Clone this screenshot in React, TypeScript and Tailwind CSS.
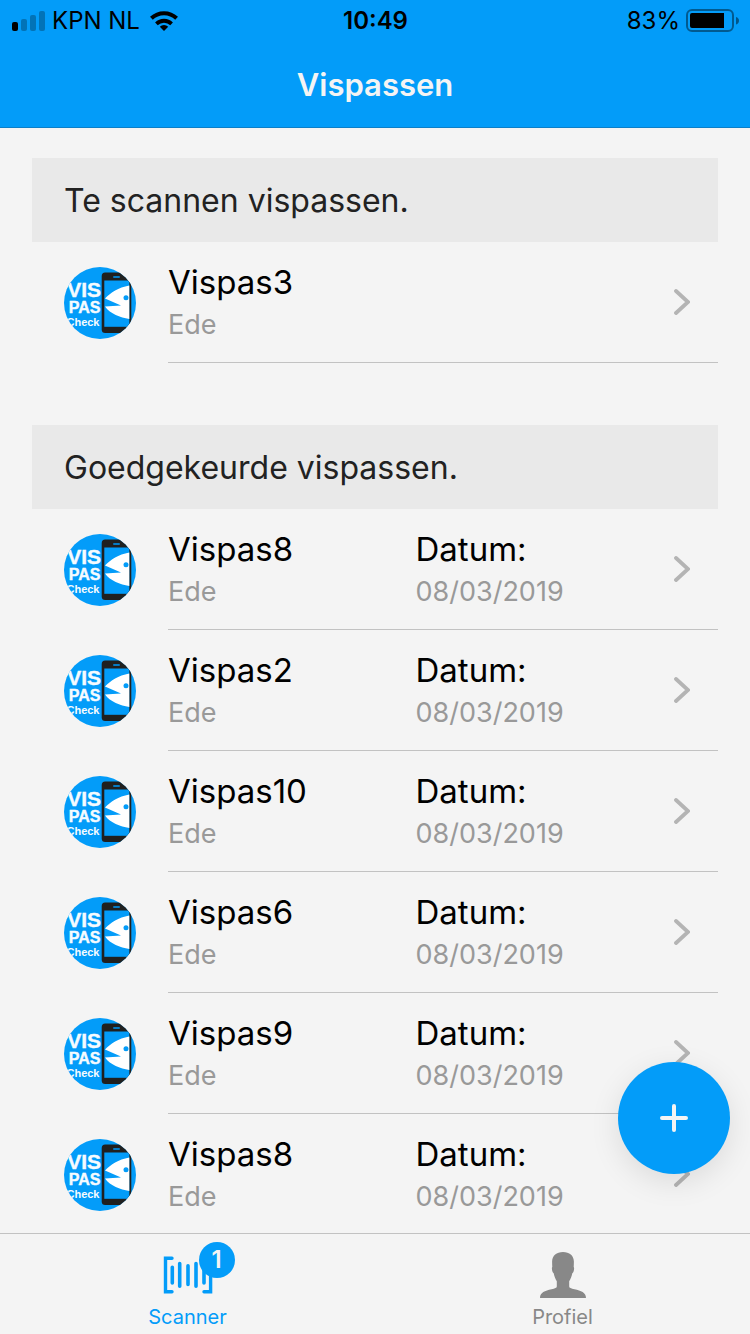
import React from "react";

type Pass = { name: string; place: string; date?: string };

const toScan: Pass[] = [{ name: "Vispas3", place: "Ede" }];

const approved: Pass[] = [
  { name: "Vispas8", place: "Ede", date: "08/03/2019" },
  { name: "Vispas2", place: "Ede", date: "08/03/2019" },
  { name: "Vispas10", place: "Ede", date: "08/03/2019" },
  { name: "Vispas6", place: "Ede", date: "08/03/2019" },
  { name: "Vispas9", place: "Ede", date: "08/03/2019" },
  { name: "Vispas8", place: "Ede", date: "08/03/2019" },
];

function SignalIcon() {
  return (
    <svg width="34" height="20" viewBox="0 0 34 20" aria-hidden="true">
      <rect x="0" y="11" width="6" height="9" rx="2" />
      <g opacity="0.26">
        <rect x="9" y="8" width="6" height="12" rx="2" />
        <rect x="18" y="4" width="6" height="16" rx="2" />
        <rect x="27" y="0" width="6" height="20" rx="2" />
      </g>
    </svg>
  );
}

function WifiIcon() {
  return (
    <svg width="28" height="20" viewBox="0 0 28 20" fill="none" stroke="#000" strokeWidth="4" aria-hidden="true">
      <path d="M1.4 7.200a18.200 18.200 0 0 1 25.200 0" />
      <path d="M6.400 12.800a11 11 0 0 1 15.200 0" strokeWidth="3.800" />
      <path d="M14 20l-4.200-4.300a6 6 0 0 1 8.400 0z" fill="#000" stroke="none" />
    </svg>
  );
}

function BatteryIcon() {
  return (
    <svg width="53" height="23" viewBox="0 0 53 23" aria-hidden="true">
      <rect x="1" y="1" width="46" height="21" rx="5" fill="none" stroke="#000" strokeOpacity="0.42" strokeWidth="2" />
      <path d="M6 4h32v15H6a2 2 0 0 1-2-2V6a2 2 0 0 1 2-2z" />
      <path d="M50 8c4 1 4 6.500 0 7.500z" opacity="0.45" />
    </svg>
  );
}

function PassLogo() {
  const id = React.useId();
  return (
    <svg className="size-18 shrink-0" viewBox="0 0 72 72" aria-hidden="true">
      <clipPath id={id}>
        <circle cx="36" cy="36" r="36" />
      </clipPath>
      <g clipPath={`url(#${id})`}>
        <rect width="72" height="72" fill="#039cf9" />
        <g fill="#f5fbff" stroke="#f5fbff" strokeWidth="0.400" fontFamily="Liberation Sans, sans-serif" fontWeight="700" textAnchor="end">
          <text x="37" y="29.500" fontSize="21">VIS</text>
          <text x="36.500" y="46" fontSize="16">PAS</text>
          <text x="35.500" y="59" fontSize="11" strokeWidth="0">Check</text>
        </g>
        <rect x="37.700" y="5.500" width="29.600" height="60.500" rx="3.500" fill="#20201f" />
        <rect x="40.300" y="13.500" width="25" height="46.300" fill="#039cf9" />
        <rect x="49" y="9" width="7" height="2" rx="1" fill="#067bc4" />
        <path d="M41 31.500C47 25.500 54 20.500 65.300 18.500V52C56 50.500 46.500 47 41 39.500L57 38.500Z" fill="#fff" />
        <circle cx="62" cy="30.700" r="2.500" fill="#039cf9" />
      </g>
    </svg>
  );
}

function Chevron() {
  return (
    <svg className="mr-7 w-4 shrink-0" viewBox="0 0 16 26" fill="none" stroke="#b4b4b4" strokeWidth="3.800" strokeLinecap="round" aria-hidden="true">
      <path d="M2 2l12 11-12 11" />
    </svg>
  );
}

function BarcodeIcon() {
  return (
    <svg width="52" height="40" viewBox="0 0 52 40" fill="none" stroke="currentColor" strokeWidth="3.600" strokeLinecap="round" aria-hidden="true">
      <path d="M10 3.300H3.500V36.800H10M42 3.300h6.600V36.800H42" strokeWidth="3.400" />
      <path d="M10.300 12.300v15.600M17.700 8.500v22.700M26 10.700v18.700M34 8.500v22.700M42 12.300v15.600" />
    </svg>
  );
}

function PersonIcon() {
  return (
    <svg width="46" height="46" viewBox="0 0 46 46" fill="currentColor" aria-hidden="true">
      <path d="M23 0C16.500 0 12.300 3.500 12.100 9.500c0 2 .1 4 .2 5.500-.7.200-.4 2.500 0 4 .4 1.400.9 2 1.400 2.300.6 3 1.700 5.700 3.100 8v5.200c0 1.400-1.800 2-5.300 2.800C5 38.800 0 40.500 0 46h46c0-5.500-5-7.200-11.500-8.700-3.500-.8-5.300-1.400-5.300-2.800v-5.200c1.400-2.300 2.500-5 3.100-8 .5-.3 1-.9 1.400-2.300.4-1.500.7-3.800 0-4 .1-1.500.2-3.500.2-5.500C33.700 3.500 29.500 0 23 0z" />
    </svg>
  );
}

function PassRow({ pass }: { pass: Pass }) {
  return (
    <li>
      <a href="#pas" className="flex items-center gap-8 pl-8">
        <PassLogo />
        <div className="flex min-w-0 flex-1 items-center border-b border-[#c2c2c2]">
          <div className="w-[45%] shrink-0 pt-[19px] pb-4">
            <p className="text-[33px] leading-[42px] text-black">{pass.name}</p>
            <p className="text-[27px] leading-[43px] text-[#999999]">{pass.place}</p>
          </div>
          <div className="min-w-0 flex-1 pt-[19px] pb-4">
            {pass.date && (
              <>
                <p className="text-[33px] leading-[42px] text-black">Datum:</p>
                <p className="text-[27px] leading-[43px] text-[#999999]">{pass.date}</p>
              </>
            )}
          </div>
          <Chevron />
        </div>
      </a>
    </li>
  );
}

function PassSection({ title, passes }: { title: string; passes: Pass[] }) {
  return (
    <section>
      <h2 className="bg-[#e9e9e9] px-8 pt-[21px] pb-[19px] text-[32px] leading-[44px] text-[#222222]">{title}</h2>
      <ul>
        {passes.map((pass, i) => (
          <PassRow key={i} pass={pass} />
        ))}
      </ul>
    </section>
  );
}

export default function App() {
  return (
    <div className="flex h-screen flex-col bg-[#f4f4f4] font-['Inter',sans-serif]">
      <header className="border-b border-[#0c7fc8] bg-[#039cf9]">
        <div className="grid h-[41px] grid-cols-3 items-center pr-[11px] pl-3 text-2xl text-black">
          <div className="flex items-center gap-1.5">
            <SignalIcon />
            <span>KPN NL</span>
            <span className="pl-1">
              <WifiIcon />
            </span>
          </div>
          <span className="text-center font-semibold">10:49</span>
          <div className="flex items-center justify-end gap-1.5">
            <span>83%</span>
            <BatteryIcon />
          </div>
        </div>
        <h1 className="pt-[22px] pb-5 text-center text-[31px] leading-[44px] font-semibold text-[#f4f4f4]">Vispassen</h1>
      </header>

      <div className="relative min-h-0 flex-1">
        <main className="flex h-full flex-col gap-[62px] overflow-y-auto px-8 pt-[30px] [scrollbar-width:none]">
          <PassSection title="Te scannen vispassen." passes={toScan} />
          <PassSection title="Goedgekeurde vispassen." passes={approved} />
        </main>
        <button
          type="button"
          aria-label="Vispas toevoegen"
          className="absolute right-5 bottom-[59px] flex size-28 items-center justify-center rounded-full bg-[#039cf9] shadow-[0_8px_30px_rgba(0,0,0,0.1)]"
        >
          <svg width="28" height="28" viewBox="0 0 28 28" stroke="#f4f4f4" strokeWidth="4" strokeLinecap="round" aria-hidden="true">
            <path d="M14 2v24M2 14h24" />
          </svg>
        </button>
      </div>

      <nav className="grid grid-cols-2 border-t border-[#c2c2c2] bg-[#f4f4f4] text-xl leading-6">
        <a href="#scanner" className="flex flex-col items-center gap-2 pt-[19px] pb-[5px] text-[#039cf9]">
          <span className="relative flex h-11 items-center">
            <BarcodeIcon />
            <span className="absolute -top-[11px] left-[37px] flex size-9 items-center justify-center rounded-full bg-[#039cf9] text-2xl font-semibold text-[#f4f4f4]">
              1
            </span>
          </span>
          Scanner
        </a>
        <a href="#profiel" className="flex flex-col items-center gap-2 pt-[19px] pb-[5px] text-[#888888]">
          <span className="flex h-11 items-center">
            <PersonIcon />
          </span>
          Profiel
        </a>
      </nav>
    </div>
  );
}
